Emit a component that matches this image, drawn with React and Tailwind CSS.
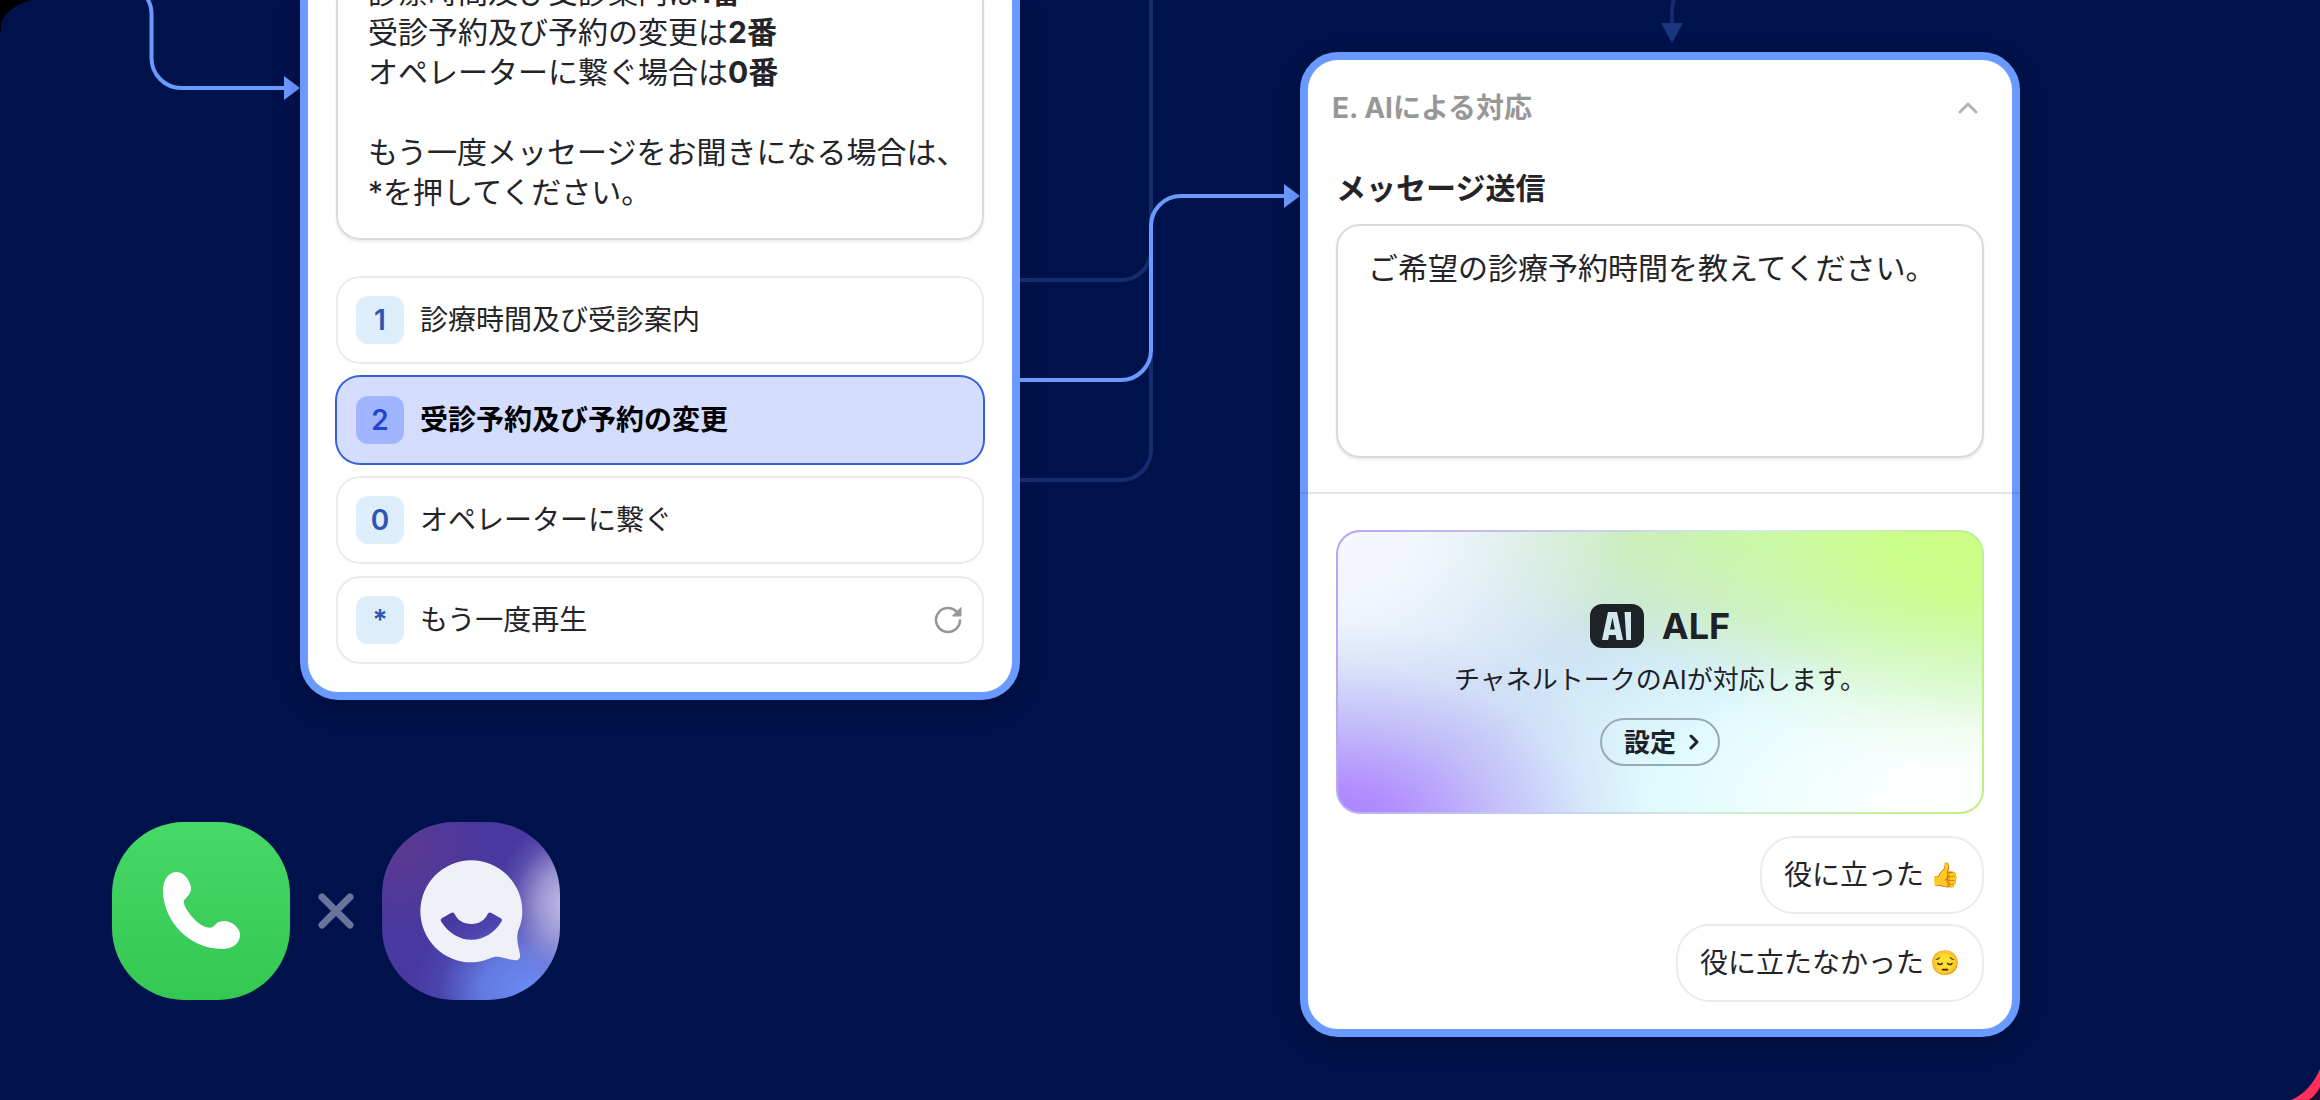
const OPTIONS = [
  { key: "1", label: "診療時間及び受診案内" },
  { key: "2", label: "受診予約及び予約の変更", selected: true },
  { key: "0", label: "オペレーターに繋ぐ" },
  { key: "*", label: "もう一度再生", replay: true },
];

const REPLIES = [
  { label: "役に立った", emoji: "👍" },
  { label: "役に立たなかった", emoji: "😔" },
];

const ReplayIcon = () => (
  <svg className="h-7 w-7" viewBox="0 0 28 28" fill="none" aria-hidden="true">
    <path
      d="M26 14.5A12 12 0 1 1 22.5 5.5"
      stroke="#979797"
      strokeWidth="2.6"
      strokeLinecap="round"
    />
    <path d="M27 1.5V10H18.5Z" fill="#979797" stroke="#979797" strokeLinejoin="round" />
  </svg>
);

const IncomingLine = () => (
  <svg className="h-[700px] w-[300px] shrink-0" viewBox="0 0 300 700" fill="none" aria-hidden="true">
    <path
      d="M121.5 -16A30 30 0 0 1 151.5 14V58A30 30 0 0 0 181.5 88H286"
      stroke="#6b9aff"
      strokeWidth="4"
    />
    <path d="M284 76L300 88L284 100Z" fill="#6b9aff" />
  </svg>
);

const BranchLines = () => (
  <svg className="h-[700px] w-[280px] shrink-0" viewBox="0 0 280 700" fill="none" aria-hidden="true">
    <g stroke="#152c6f" strokeWidth="4">
      <path d="M0 280H101A30 30 0 0 0 131 250V0" />
      <path d="M0 480H101A30 30 0 0 0 131 450V230" />
    </g>
    <path
      d="M0 380H101A30 30 0 0 0 131 350V226A30 30 0 0 1 161 196H266"
      stroke="#6b9aff"
      strokeWidth="4"
    />
    <path d="M264 184L280 196L264 208Z" fill="#6b9aff" />
  </svg>
);

const Option = ({ option }) => (
  <button
    type="button"
    className={
      option.selected
        ? "flex h-[88px] items-center gap-4 rounded-3xl border border-[#355edc] bg-[#d4ddff] px-[19px] text-left text-[28px] font-bold text-black ring-1 ring-[#355edc]"
        : "flex h-[88px] items-center gap-4 rounded-3xl border-2 border-[#ebebeb] bg-white pr-5 pl-[18px] text-left text-[28px] text-[#242428]"
    }
  >
    <span
      className={
        option.selected
          ? "flex h-12 w-12 items-center justify-center rounded-xl bg-[#a0b4ff] font-semibold text-[#1f45cf]"
          : "flex h-12 w-12 items-center justify-center rounded-xl bg-[#ddedfa] font-semibold text-[#2b56b4]"
      }
    >
      {option.key}
    </span>
    <span className="flex-1">{option.label}</span>
    {option.replay && <ReplayIcon />}
  </button>
);

const MenuCard = () => (
  <section className="w-[720px] rounded-b-[38px] border-8 border-t-0 border-[#6b9aff] bg-white px-7 pb-7 shadow-[0_8px_24px_rgba(0,0,0,0.2)]">
    <div className="flex h-60 flex-col justify-end overflow-hidden rounded-b-3xl border-2 border-t-0 border-[#dadada] px-[30px] pb-[26px] text-[30px] leading-10 text-[#242428] shadow-[0_2px_3px_rgba(0,0,0,0.08)]">
      <p>
        診療時間及び受診案内は<b>1番</b>
      </p>
      <p>
        受診予約及び予約の変更は<b>2番</b>
      </p>
      <p>
        オペレーターに繋ぐ場合は<b>0番</b>
      </p>
      <p className="mt-10 whitespace-nowrap">もう一度メッセージをお聞きになる場合は、</p>
      <p>*を押してください。</p>
    </div>
    <div className="mt-9 flex flex-col gap-3">
      {OPTIONS.map((option) => (
        <Option key={option.key} option={option} />
      ))}
    </div>
  </section>
);

const AlfBanner = () => (
  <div className="mt-9 h-[284px] rounded-3xl bg-[linear-gradient(100deg,#b9a3f5_0%,#c5cdf5_35%,#d0f0dc_60%,#bdf07f_100%)] p-[2px]">
    <div className="flex h-full flex-col items-center rounded-[22px] bg-[radial-gradient(ellipse_48%_72%_at_0%_105%,#ab80ff_0%,#b08afff0_20%,#b9a2fb90_52%,#c4c0f830_80%,#c4c0f800_100%),radial-gradient(ellipse_60%_85%_at_102%_0%,#cdff84_0%,#ccff8af0_30%,#ceffa09c_58%,#d4ffb030_82%,#d4ffb000_100%),radial-gradient(ellipse_50%_75%_at_100%_100%,#ffffff_0%,#ffffffd0_35%,#ffffff00_100%),radial-gradient(ellipse_45%_85%_at_0%_0%,#f6f8ff_0%,#f4f7fff0_30%,#f0f5ff80_62%,#f6f8ff00_100%),radial-gradient(ellipse_48%_55%_at_62%_-5%,#c6f0a8_0%,#cbf0b4a0_50%,#cbf0b400_100%),radial-gradient(ellipse_58%_75%_at_72%_95%,#e4ffff_0%,#e2ffffe0_40%,#e2ffff00_100%),linear-gradient(#cfe8e2,#cbe0f3_45%,#ccdcf6)] pt-[72px] text-[#1e2226]">
      <div className="flex items-center gap-[18px]">
        <span className="flex h-11 w-[54px] items-center justify-center rounded-xl bg-[#1e2226]">
          <svg className="h-7 w-[30px]" viewBox="0 0 30 28" aria-label="AI" role="img">
            <path
              fill="#d1e8ec"
              fillRule="evenodd"
              d="M6 0H15L21 28H14.500L13.700 23H7L6.200 28H0ZM8 17.500H12.800L10.500 5.500ZM22.500 0H29V28H24.300Z"
            />
          </svg>
        </span>
        <strong className="text-4xl leading-[44px] font-bold">ALF</strong>
      </div>
      <p className="mt-3 text-[26px] leading-10">チャネルトークのAIが対応します。</p>
      <button
        type="button"
        className="mt-[18px] flex h-12 items-center gap-3 rounded-full border-2 border-[#9aa9b3] pr-[18px] pl-[22px] text-[26px] font-bold text-[#1e2226]"
      >
        設定
        <svg className="h-4 w-3" viewBox="0 0 12 16" fill="none" aria-hidden="true">
          <path
            d="M3 2L9 8L3 14"
            stroke="#1e2226"
            strokeWidth="3"
            strokeLinecap="round"
            strokeLinejoin="round"
          />
        </svg>
      </button>
    </div>
  </div>
);

const AiCard = () => (
  <section className="w-[720px] rounded-[38px] border-8 border-[#6b9aff] bg-white px-7 pt-7 pb-[27px] shadow-[0_8px_24px_rgba(0,0,0,0.2)]">
    <header className="-ml-1 flex items-center justify-between">
      <h2 className="text-[28px] leading-10 font-bold text-[#979797]">E. AIによる対応</h2>
      <button type="button" aria-label="閉じる" className="flex h-8 w-8 items-center justify-center">
        <svg className="h-3 w-5" viewBox="0 0 20 12" fill="none" aria-hidden="true">
          <path
            d="M2 10L10 2L18 10"
            stroke="#b4b4b4"
            strokeWidth="3"
            strokeLinecap="round"
            strokeLinejoin="round"
          />
        </svg>
      </button>
    </header>
    <label htmlFor="message" className="mt-9 block text-[30px] leading-[48px] font-bold text-[#242428]">
      メッセージ送信
    </label>
    <textarea
      id="message"
      className="mt-3 block h-[234px] w-full resize-none rounded-3xl border-2 border-[#dadada] bg-white px-[30px] py-[22px] text-[30px] leading-10 text-[#242428] shadow-[0_2px_3px_rgba(0,0,0,0.08)] outline-none"
      defaultValue="ご希望の診療予約時間を教えてください。"
    />
    <hr className="-mx-9 mt-[34px] border-t-2 border-black/10" />
    <AlfBanner />
    <div className="mt-[22px] flex flex-col items-end gap-[10px]">
      {REPLIES.map((reply) => (
        <button
          key={reply.label}
          type="button"
          className="flex h-[78px] items-center gap-[6px] rounded-[34px] border-2 border-[#ebebeb] px-[22px] text-[28px] text-[#242428]"
        >
          {reply.label}
          <span className="text-2xl">{reply.emoji}</span>
        </button>
      ))}
    </div>
  </section>
);

const Logos = () => (
  <div className="mt-[122px] ml-28 flex items-center gap-7">
    <div className="h-[178px] w-[178px] overflow-hidden rounded-[72px] bg-linear-to-b from-[#47d868] to-[#34c751]">
      <svg viewBox="0 0 534 534" fill="white" aria-label="Phone" role="img">
        <path d="M195 150C170 150 153 172 153 205C153 300 235 381 330 381C362 381 384 364 384 338C384 318 360 297 336 297C316 297 310 309 302 315C292 321 270 314 252 297C234 280 213 250 215 238C217 230 237 218 237 200C237 178 216 150 195 150Z" />
      </svg>
    </div>
    <svg className="h-9 w-9" viewBox="0 0 36 36" aria-hidden="true">
      <path d="M4 4L32 32M32 4L4 32" stroke="#69749b" strokeWidth="7" strokeLinecap="round" />
    </svg>
    <div className="h-[178px] w-[178px] overflow-hidden rounded-[72px] bg-[radial-gradient(ellipse_40%_48%_at_104%_46%,#c3c0e8_0%,#b0acdfc8_40%,#8a82cc50_75%,#7a70c400_100%),radial-gradient(ellipse_66%_52%_at_82%_94%,#6b8bf2_0%,#6785ecd8_40%,#5460cc50_75%,#4a3aa500_100%),radial-gradient(ellipse_55%_50%_at_10%_14%,#5a3a90_0%,#4838a000_100%),linear-gradient(#4838a0,#4838a0)]">
      <svg viewBox="0 0 534 534" fill="#f0f0f9" aria-label="Channel Talk" role="img">
        <path
          fillRule="evenodd"
          d="M268 115A153 153 0 0 1 421 268C421 290 416 308 410 322C402 345 407 366 414 397C416 409 410 416 400 415C378 413 356 402 336 405C316 411 298 421 268 421A153 153 0 0 1 268 115ZM182 287C175 291 175 294 178 299C197 330 231 353 268 353C305 353 340 330 358 299C361 294 361 291 354 287L328 273C323 270 320 271 317 276C308 295 292 306 268 306C244 306 227 295 218 276C215 271 212 270 207 273Z"
        />
      </svg>
    </div>
  </div>
);

const App = () => {
  return (
    <main className="relative flex min-h-screen items-start overflow-hidden bg-[#00124b] font-['Inter','Noto_Sans_CJK_JP',sans-serif]">
      <div className="shrink-0">
        <div className="flex items-start">
          <IncomingLine />
          <MenuCard />
          <BranchLines />
        </div>
        <Logos />
      </div>
      <div className="shrink-0">
        <svg className="mx-auto block h-[52px] w-12" viewBox="0 0 48 52" fill="none" aria-hidden="true">
          <path d="M39 -2C36.5 2 36 6 36 12V24" stroke="#152c6f" strokeWidth="4" />
          <path d="M25 23H47L36 43Z" fill="#1c357f" />
        </svg>
        <AiCard />
      </div>
      {/* rounded frame corners */}
      <svg className="absolute top-0 left-0 h-8 w-8" viewBox="0 0 32 32" aria-hidden="true">
        <path d="M0 0H32Q10 5 1 22V32H0Z" fill="black" />
      </svg>
      <svg className="absolute right-0 bottom-0 h-8 w-8" viewBox="0 0 32 32" aria-hidden="true">
        <path d="M3 32Q22 24 32 1V32Z" fill="#ff2f5c" />
        <path d="M21 32Q28 27 32 19V32Z" fill="#1a1030" />
      </svg>
    </main>
  );
};

export default App;
